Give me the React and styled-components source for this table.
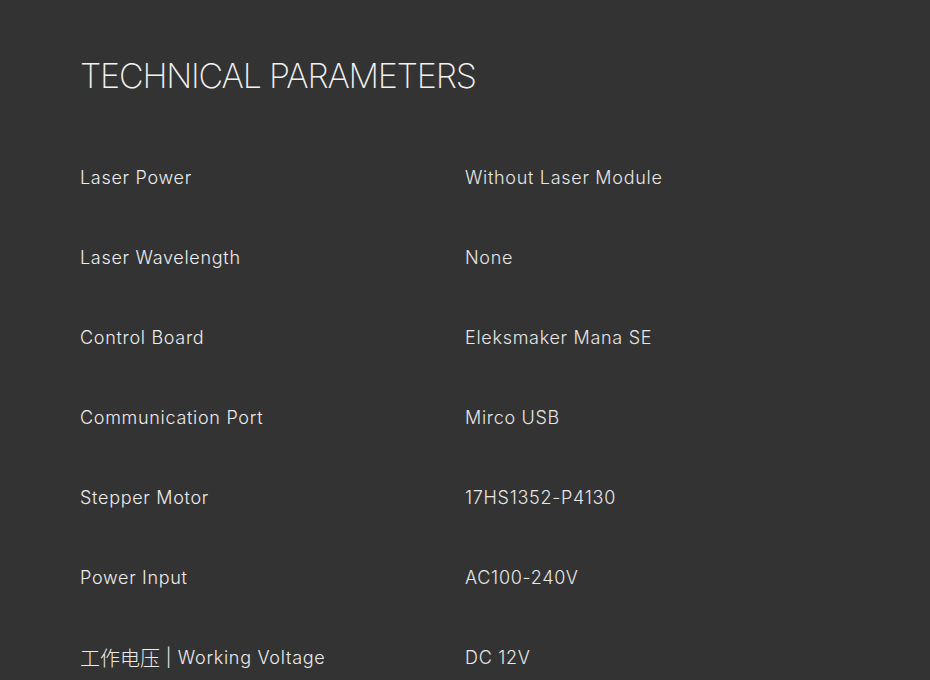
import React from "react";
import styled, { createGlobalStyle } from "styled-components";

const Global = createGlobalStyle`
  body {
    margin: 0;
    background-color: #333333;
  }
`;

const Screen = styled.div`
  width: 100vw;
  min-height: 100vh;
  background-color: #333333;
  padding: 56px 0 0 80px;
  box-sizing: border-box;
  font-family: Inter, "Noto Sans CJK SC", sans-serif;
  color: #ececec;
`;

const Title = styled.h2`
  margin: 0;
  font-size: 34px;
  line-height: 40px;
  font-weight: 200;
  letter-spacing: -1.2px;
  color: #f2f2f2;
`;

const Table = styled.div`
  display: grid;
  grid-template-columns: 385px auto;
  grid-auto-rows: 80px;
  margin-top: 41px;
`;

const Cell = styled.div`
  display: flex;
  align-items: center;
  font-size: 18px;
  font-weight: 300;
  letter-spacing: 0.7px;
  white-space: pre;
  color: ${(p) => (p.$value ? "#e6e6e6" : "#ececec")};
`;

const Cjk = styled.span`
  font-family: "Noto Sans CJK SC", sans-serif;
  font-size: 20px;
  font-weight: 300;
  letter-spacing: 0;
`;

const rows = [
  ["Laser Power", "Without Laser Module"],
  ["Laser Wavelength", "None"],
  ["Control Board", "Eleksmaker Mana SE"],
  ["Communication Port", "Mirco USB"],
  ["Stepper Motor", "17HS1352-P4130"],
  ["Power Input", "AC100-240V"],
  [
    <>
      <Cjk>工作电压</Cjk> | Working Voltage
    </>,
    "DC 12V",
  ],
];

function App() {
  return (
    <Screen>
      <Global />
      <Title>TECHNICAL PARAMETERS</Title>
      <Table>
        {rows.map(([label, value]) => (
          <React.Fragment key={value}>
            <Cell>{label}</Cell>
            <Cell $value>{value}</Cell>
          </React.Fragment>
        ))}
      </Table>
    </Screen>
  );
}

export default App;
